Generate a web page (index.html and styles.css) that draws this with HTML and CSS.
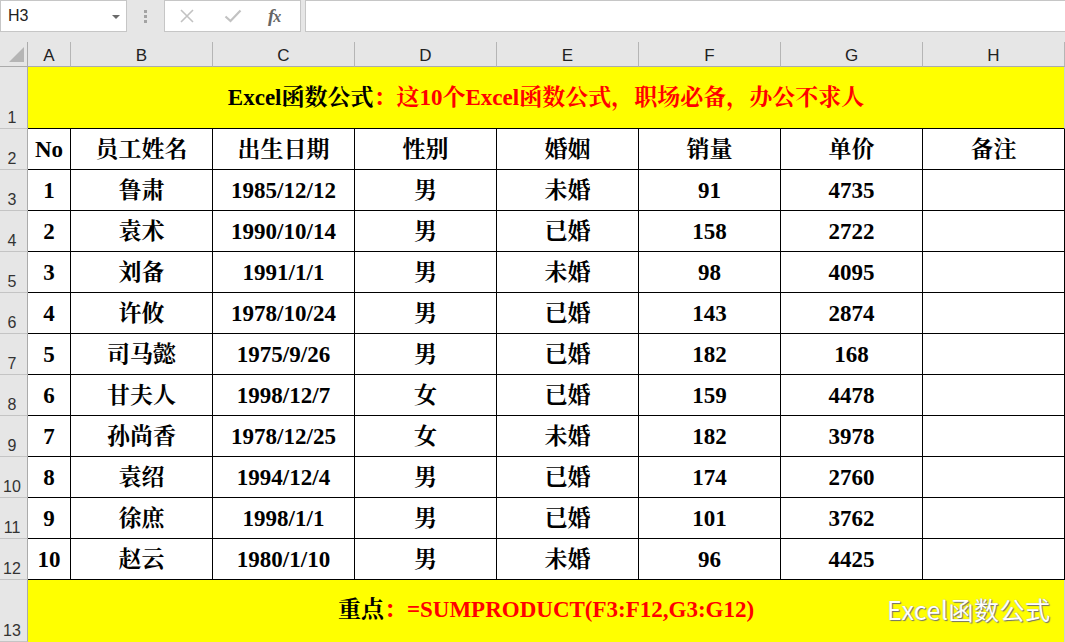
FILE: index.html
```html
<!DOCTYPE html>
<html lang="zh-CN">
<head>
<meta charset="utf-8">
<title>Excel</title>
<link rel="stylesheet" href="styles.css">
</head>
<body>
<div class="app">
  <div class="fbar">
    <div class="namebox"><span>H3</span><span class="caret"></span></div>
    <div class="grip"><i></i><i></i><i></i></div>
    <div class="btns">
      <svg class="ico-x" width="14" height="14" viewBox="0 0 14 14"><path d="M1 1L13 13M13 1L1 13" stroke="#c2c2c2" stroke-width="1.6" fill="none"/></svg>
      <svg class="ico-ok" width="18" height="14" viewBox="0 0 18 14"><path d="M1.5 7.5L6.5 12L16.5 1.5" stroke="#c2c2c2" stroke-width="2.2" fill="none"/></svg>
      <span class="fx">f<small>x</small></span>
    </div>
    <div class="finput"></div>
  </div>
  <div class="sheet">
    <div class="corner"><svg width="28" height="24" viewBox="0 0 28 24"><path d="M24 5V20H9Z" fill="#b5b5b5"/></svg></div>
    <div class="ch">A</div><div class="ch">B</div><div class="ch">C</div><div class="ch">D</div><div class="ch">E</div><div class="ch">F</div><div class="ch">G</div><div class="ch">H</div>

    <div class="rh">1</div>
    <div class="title"><span>Excel函数公式</span><span class="red">：这10个Excel函数公式，职场必备，办公不求人</span></div>

    <div class="rh">2</div>
    <div class="c">No</div><div class="c">员工姓名</div><div class="c">出生日期</div><div class="c">性别</div><div class="c">婚姻</div><div class="c">销量</div><div class="c">单价</div><div class="c">备注</div>

    <div class="rh">3</div>
    <div class="c">1</div><div class="c">鲁肃</div><div class="c">1985/12/12</div><div class="c">男</div><div class="c">未婚</div><div class="c">91</div><div class="c">4735</div><div class="c"></div>
    <div class="rh">4</div>
    <div class="c">2</div><div class="c">袁术</div><div class="c">1990/10/14</div><div class="c">男</div><div class="c">已婚</div><div class="c">158</div><div class="c">2722</div><div class="c"></div>
    <div class="rh">5</div>
    <div class="c">3</div><div class="c">刘备</div><div class="c">1991/1/1</div><div class="c">男</div><div class="c">未婚</div><div class="c">98</div><div class="c">4095</div><div class="c"></div>
    <div class="rh">6</div>
    <div class="c">4</div><div class="c">许攸</div><div class="c">1978/10/24</div><div class="c">男</div><div class="c">已婚</div><div class="c">143</div><div class="c">2874</div><div class="c"></div>
    <div class="rh">7</div>
    <div class="c">5</div><div class="c">司马懿</div><div class="c">1975/9/26</div><div class="c">男</div><div class="c">已婚</div><div class="c">182</div><div class="c">168</div><div class="c"></div>
    <div class="rh">8</div>
    <div class="c">6</div><div class="c">甘夫人</div><div class="c">1998/12/7</div><div class="c">女</div><div class="c">已婚</div><div class="c">159</div><div class="c">4478</div><div class="c"></div>
    <div class="rh">9</div>
    <div class="c">7</div><div class="c">孙尚香</div><div class="c">1978/12/25</div><div class="c">女</div><div class="c">未婚</div><div class="c">182</div><div class="c">3978</div><div class="c"></div>
    <div class="rh">10</div>
    <div class="c">8</div><div class="c">袁绍</div><div class="c">1994/12/4</div><div class="c">男</div><div class="c">已婚</div><div class="c">174</div><div class="c">2760</div><div class="c"></div>
    <div class="rh">11</div>
    <div class="c">9</div><div class="c">徐庶</div><div class="c">1998/1/1</div><div class="c">男</div><div class="c">已婚</div><div class="c">101</div><div class="c">3762</div><div class="c"></div>
    <div class="rh">12</div>
    <div class="c">10</div><div class="c">赵云</div><div class="c">1980/1/10</div><div class="c">男</div><div class="c">未婚</div><div class="c">96</div><div class="c">4425</div><div class="c"></div>

    <div class="rh">13</div>
    <div class="foot"><span>重点</span><span class="red">：=SUMPRODUCT(F3:F12,G3:G12)</span><span class="wm">Excel函数公式</span></div>
  </div>
</div>
</body>
</html>
```

FILE: styles.css
```css
html, body {
  margin: 0;
  padding: 0;
  background: #ffffff;
}

.app {
  width: 1065px;
  height: 642px;
  overflow: hidden;
  background: #e6e6e6;
}

/* formula bar */
.fbar {
  display: flex;
  align-items: flex-start;
  height: 42px;
}

.namebox {
  box-sizing: border-box;
  width: 127px;
  height: 32px;
  background: #ffffff;
  border: 1px solid #c6c6c6;
  display: flex;
  align-items: center;
  justify-content: space-between;
  padding: 0 6px 0 7px;
  font: 16px "Liberation Sans", Arial, sans-serif;
  color: #222;
}

.caret {
  width: 0;
  height: 0;
  border-left: 4px solid transparent;
  border-right: 4px solid transparent;
  border-top: 4px solid #6a6a6a;
  margin-top: 1px;
}

.grip {
  width: 37px;
  height: 32px;
  display: flex;
  flex-direction: column;
  align-items: center;
  justify-content: center;
  gap: 2px;
}

.grip i {
  display: block;
  width: 3px;
  height: 3px;
  background: #a3a3a3;
}

.btns {
  box-sizing: border-box;
  width: 137px;
  height: 32px;
  background: #ffffff;
  border: 1px solid #c6c6c6;
  display: flex;
  align-items: center;
  padding-left: 15px;
}

.ico-x {
  margin-right: 30px;
}

.ico-ok {
  margin-right: 26px;
}

.fx {
  font: italic bold 19px "Liberation Serif", "Times New Roman", serif;
  color: #666;
  letter-spacing: -1px;
}

.fx small {
  font-size: 16px;
}

.finput {
  box-sizing: border-box;
  flex: 1;
  margin-left: 4px;
  margin-right: -2px;
  height: 32px;
  background: #ffffff;
  border: 1px solid #c6c6c6;
}

/* sheet grid */
.sheet {
  display: grid;
  grid-template-columns: 28px 43px repeat(7, 142px);
  grid-template-rows: 25px 62px repeat(11, 41px) 62px;
  background: #ffffff;
}

.sheet > div {
  box-sizing: border-box;
}

.corner {
  background: #e6e6e6;
  border-right: 1px solid #ababab;
  border-bottom: 1px solid #ababab;
}

.corner svg {
  display: block;
}

.ch {
  background: #e6e6e6;
  border-right: 1px solid #b5b5b5;
  border-bottom: 1px solid #ababab;
  display: flex;
  align-items: flex-end;
  justify-content: center;
  padding-bottom: 2px;
  font: 17px "Liberation Sans", Arial, sans-serif;
  color: #222;
  line-height: 1;
}

.rh {
  background: #e6e6e6;
  border-right: 1px solid #ababab;
  border-bottom: 1px solid #c4c4c4;
  display: flex;
  align-items: flex-end;
  justify-content: center;
  padding: 0 3px 2px 0;
  font: 16px "Liberation Sans", Arial, sans-serif;
  color: #333;
  line-height: 1;
}

.c, .title, .foot {
  font-family: "Liberation Serif", "Times New Roman", "Noto Serif CJK SC", "Noto Sans CJK SC", serif;
  font-weight: bold;
  font-size: 23px;
  color: #000;
  line-height: 1;
  display: flex;
  align-items: center;
  justify-content: center;
}

.c {
  border-right: 1px solid #000;
  border-bottom: 1px solid #000;
}

.title {
  grid-column: 2 / 10;
  background: #ffff00;
  border-bottom: 1px solid #000;
  border-right: 1px solid #d0d0d0;
}

.foot {
  grid-column: 2 / 10;
  background: #ffff00;
  border-right: 1px solid #d0d0d0;
  position: relative;
  padding-bottom: 4px;
}

.red {
  color: #ff0000;
}

.wm {
  position: absolute;
  left: 859px;
  top: 17px;
  font: 25px "Noto Sans CJK SC", "Liberation Sans", sans-serif;
  color: #ffffff;
  text-shadow: 1px 1px 1px #6e6e6e, 0 0 1px #9a9a9a;
  line-height: 1;
  letter-spacing: 0.5px;
}
```
